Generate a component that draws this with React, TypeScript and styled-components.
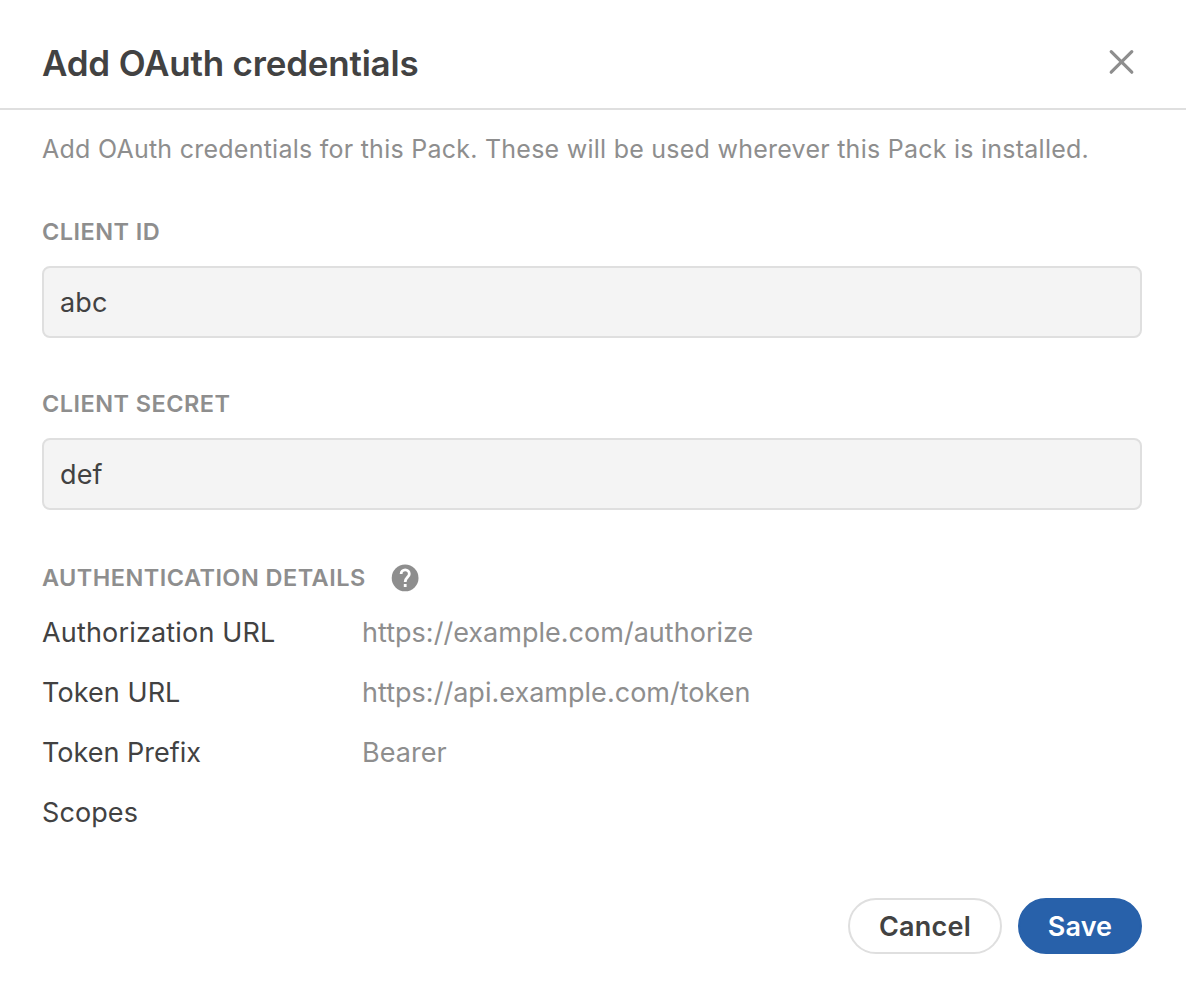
import React from 'react';
import styled, { createGlobalStyle } from 'styled-components';

const GlobalStyle = createGlobalStyle`
  * { box-sizing: border-box; }
  body { margin: 0; background: #fff; font-family: Inter, "Liberation Sans", sans-serif; color: #424242; }
`;
const Dialog = styled.section`
  width: 1186px; height: 988px; display: flex; flex-direction: column; background: #fff;
`;
const Header = styled.header`
  height: 110px; padding: 16px 44px 0 42px; display: flex; align-items: center; justify-content: space-between;
  border-bottom: 2px solid #dfdfdf;
`;
const Title = styled.h1`
  margin: 0; padding-top: 2px; font-size: 35px; line-height: 44px; font-weight: 600; letter-spacing: -0.2px; white-space: nowrap;
`;
const CloseButton = styled.button`
  width: 40px; height: 40px; padding: 0; border: 0; background: none; display: flex; color: #8e8e8e;
`;
const Body = styled.div`
  padding: 23px 44px 0 42px; display: flex; flex-direction: column;
`;
const Intro = styled.p`
  margin: 0 0 51px; font-size: 25px; line-height: 32px; letter-spacing: 0.25px; color: #8e8e8e; white-space: nowrap;
`;
const Label = styled.label`
  margin: 0; font-size: 23.5px; line-height: 32px; font-weight: 600; letter-spacing: 0.46px; color: #8e8e8e; white-space: nowrap;
`;
const Input = styled.input`
  height: 72px; margin: 18px 0 50px; padding: 0 16px; border: 2px solid #dfdfdf; border-radius: 8px;
  background: #f4f4f4; font: 400 27px Inter, sans-serif; letter-spacing: 0.1px; color: #424242; outline: none;
`;
const DetailsHeading = styled.div`
  height: 32px; margin-top: 2px; display: flex; align-items: center; gap: 25px;
`;
const HelpIcon = styled.svg`
  width: 28px; height: 28px; flex: none; color: #8e8e8e;
`;
const Details = styled.dl`
  margin: 9px 0 0; display: grid; grid-template-columns: 320px 1fr; grid-auto-rows: 60px;
`;
const Term = styled.dt<{ $tracking?: number }>`
  font-size: 27px; line-height: 60px; letter-spacing: ${p => p.$tracking ?? 0}px; white-space: nowrap;
`;
const Value = styled.dd`
  margin: 0; font-size: 27px; line-height: 60px; letter-spacing: 0.02px; color: #8e8e8e; white-space: nowrap;
`;
const Footer = styled.footer`
  margin-top: auto; padding: 0 44px 34px; display: flex; justify-content: flex-end; gap: 16px;
`;
const Button = styled.button<{ $primary?: boolean }>`
  width: ${p => (p.$primary ? 124 : 154)}px; height: 56px; padding: 0; border-radius: 28px;
  border: 2px solid ${p => (p.$primary ? '#2861aa' : '#dfdfdf')};
  background: ${p => (p.$primary ? '#2861aa' : '#fff')}; color: ${p => (p.$primary ? '#fff' : '#424242')};
  font: 600 27px Inter, sans-serif; letter-spacing: ${p => (p.$primary ? 0.1 : 0.25)}px;
`;

const details = [
  { name: 'Authorization URL', value: 'https://example.com/authorize', tracking: 0.17 },
  { name: 'Token URL', value: 'https://api.example.com/token', tracking: 0.08 },
  { name: 'Token Prefix', value: 'Bearer' },
  { name: 'Scopes', value: '', tracking: 0.1 },
];

export default function App() {
  return (
    <>
      <GlobalStyle />
      <Dialog>
        <Header>
          <Title>Add OAuth credentials</Title>
          <CloseButton aria-label="Close">
            <svg width="40" height="40" viewBox="0 0 40 40" fill="none" stroke="currentColor" strokeWidth="3.2" strokeLinecap="round">
              <path d="M9.2 9.6L29.8 30.2M29.8 9.6L9.2 30.2" />
            </svg>
          </CloseButton>
        </Header>
        <Body>
          <Intro>Add OAuth credentials for this Pack. These will be used wherever this Pack is installed.</Intro>
          <Label htmlFor="client-id">CLIENT ID</Label>
          <Input id="client-id" defaultValue="abc" />
          <Label htmlFor="client-secret">CLIENT SECRET</Label>
          <Input id="client-secret" defaultValue="def" />
          <DetailsHeading>
            <Label as="h2">AUTHENTICATION DETAILS</Label>
            <HelpIcon viewBox="0 0 28 28" fill="none">
              <circle cx="14.1" cy="13.9" r="13.4" fill="currentColor" />
              <path d="M10.1 9.9a4.1 4.1 0 0 1 8.2 0c0 3.4-4.1 3.6-4.1 8" stroke="#fff" strokeWidth="2.8" />
              <rect x="12.8" y="20" width="2.8" height="3" fill="#fff" />
            </HelpIcon>
          </DetailsHeading>
          <Details>
            {details.map(d => (
              <React.Fragment key={d.name}>
                <Term $tracking={d.tracking}>{d.name}</Term>
                <Value>{d.value}</Value>
              </React.Fragment>
            ))}
          </Details>
        </Body>
        <Footer>
          <Button>Cancel</Button>
          <Button $primary>Save</Button>
        </Footer>
      </Dialog>
    </>
  );
}
